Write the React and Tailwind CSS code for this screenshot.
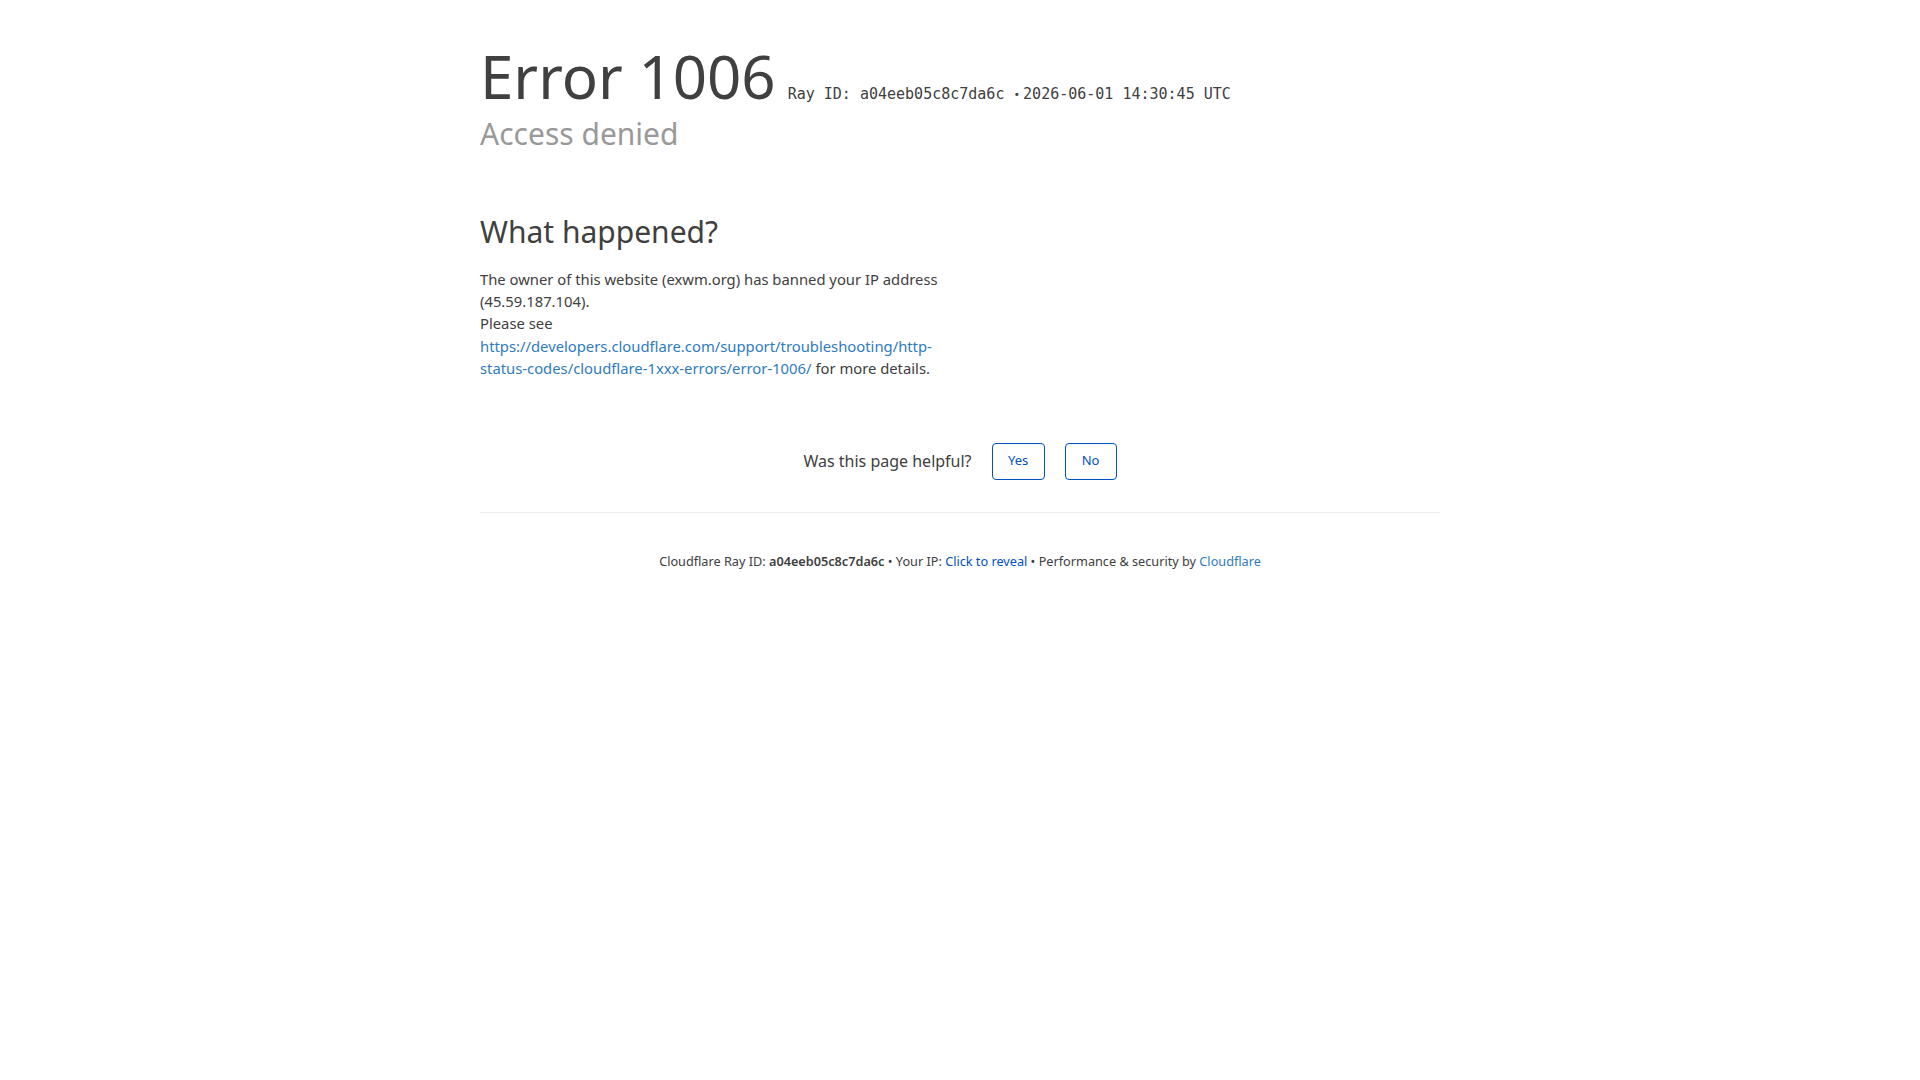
export default function App() {
  return (
    <div className="min-h-screen bg-white text-[#404040]" style={{ fontFamily: '"Noto Sans", "Open Sans", sans-serif' }}>
      <div className="mx-auto w-[960px] pt-[46px]">
        {/* Header */}
        <h1 className="text-[60px] leading-[60px] font-normal text-[#404040]">
          <span>Error 1006</span>
          <span className="ml-[12px] text-[15px] text-[#404040]" style={{ fontFamily: '"DejaVu Sans Mono", monospace' }}>
            Ray ID: a04eeb05c8c7da6c <span className="mr-[3px] align-middle text-[11px]">•</span>2026-06-01 14:30:45 UTC
          </span>
        </h1>
        <h2 className="mt-[-9px] text-[30px] leading-[36px] text-[#999999]">Access denied</h2>

        {/* What happened */}
        <section className="mt-[62px] w-[464px]">
          <h2 className="text-[30px] leading-[36px] text-[#404040]">What happened?</h2>
          <p className="mt-[18px] text-[14.8px] leading-[22.4px]">
            The owner of this website (exwm.org) has banned your IP address (45.59.187.104).
            <br />
            Please see{" "}
            <a href="#" className="text-[#2f7bbf]">
              https://developers.cloudflare.com/support/troubleshooting/http-status-codes/cloudflare-1xxx-errors/error-1006/
            </a>{" "}
            for more details.
          </p>
        </section>

        {/* Feedback */}
        <div className="mt-[63px] flex items-center justify-center gap-[20px]">
          <span className="text-[16px] leading-[24px]">Was this page helpful?</span>
          <div className="flex gap-[20px]">
            <button className="h-[37px] w-[53px] rounded-[4px] border border-[#0051c3] text-[13px] text-[#0051c3]">Yes</button>
            <button className="h-[37px] w-[52px] rounded-[4px] border border-[#0051c3] text-[13px] text-[#0051c3]">No</button>
          </div>
        </div>

        <div className="mt-[32px] border-t border-[#ebebeb]"></div>

        {/* Footer */}
        <p className="mt-[39px] text-center text-[12.7px] leading-[19px]">
          Cloudflare Ray ID: <strong className="font-semibold">a04eeb05c8c7da6c</strong> • Your IP:{" "}
          <a href="#" className="text-[#0051c3]">Click to reveal</a> • Performance &amp; security by{" "}
          <a href="#" className="text-[#2f7bbf]">Cloudflare</a>
        </p>
      </div>
    </div>
  );
}
